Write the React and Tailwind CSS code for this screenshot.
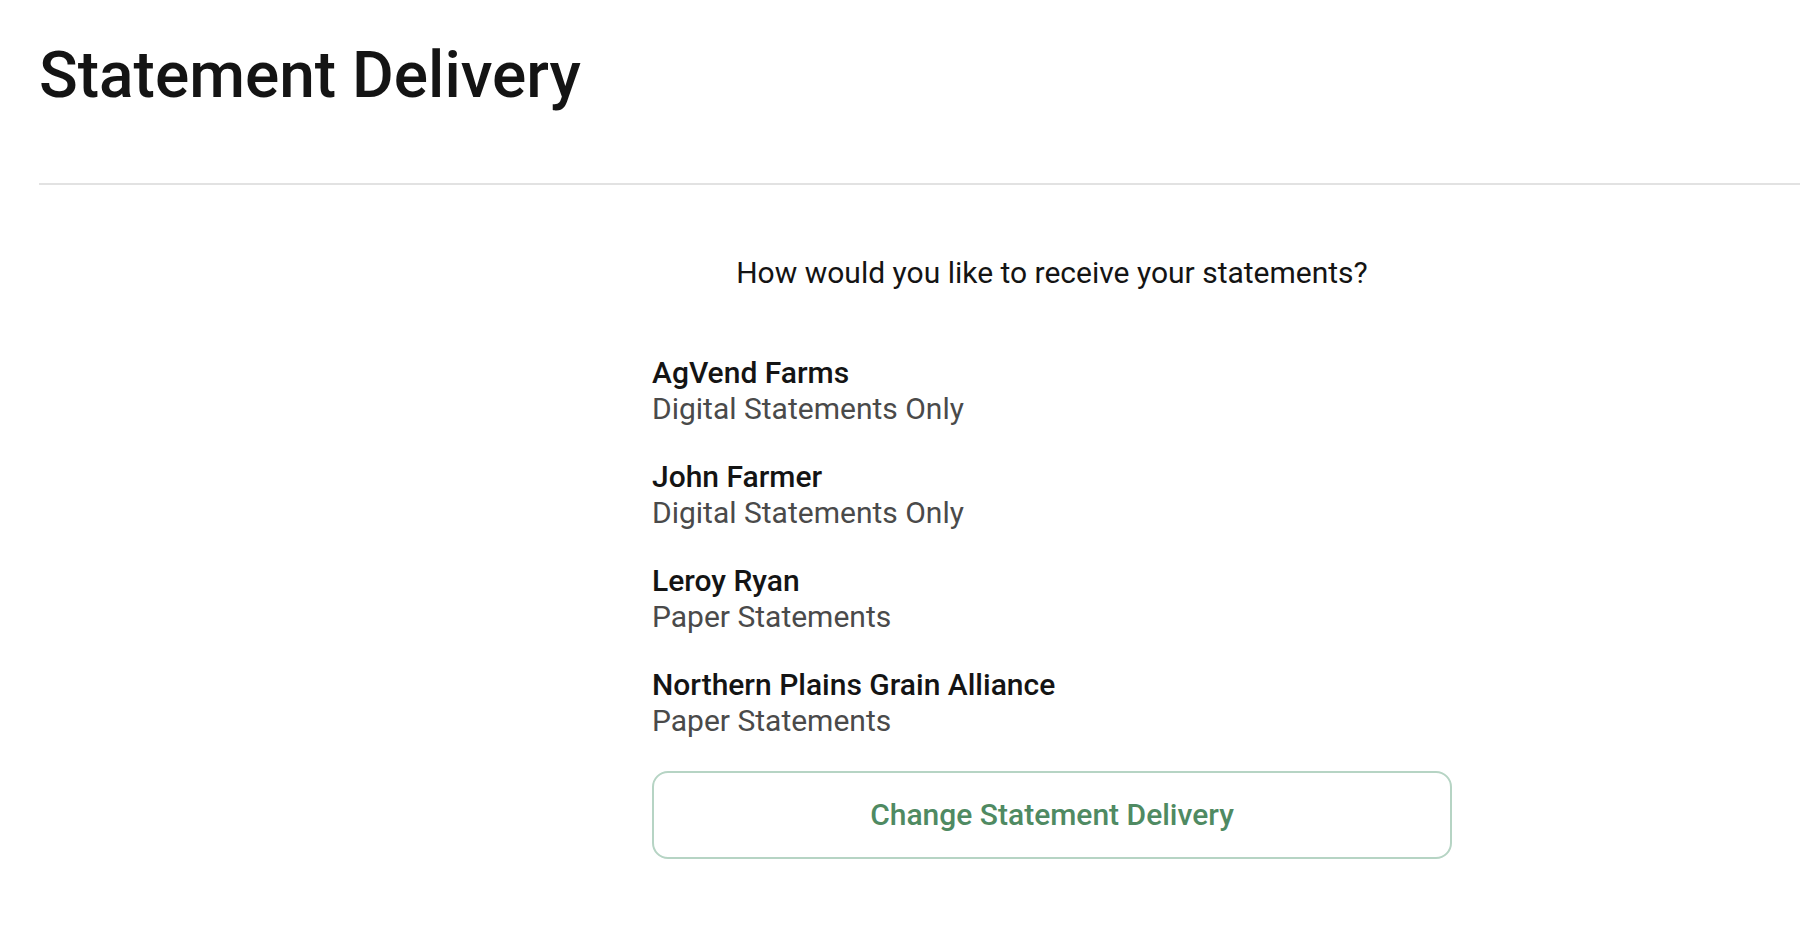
import React from "react";

const accounts = [
  { name: "AgVend Farms", delivery: "Digital Statements Only" },
  { name: "John Farmer", delivery: "Digital Statements Only" },
  { name: "Leroy Ryan", delivery: "Paper Statements" },
  { name: "Northern Plains Grain Alliance", delivery: "Paper Statements" },
];

export default function App() {
  return (
    <div className="min-h-screen bg-white font-['Roboto',sans-serif] text-[#141414]">
      <header className="pl-[39px] pt-[44px]">
        <h1 className="text-[64px] leading-none font-medium">Statement Delivery</h1>
        <div className="mt-[75px] h-[2px] bg-[#e2e2e2]" />
      </header>

      <main className="ml-[652px] w-[800px] pt-[70px] pb-16">
        <p className="text-center text-3xl">How would you like to receive your statements?</p>

        <ul className="mt-16 flex flex-col gap-8">
          {accounts.map((a) => (
            <li key={a.name}>
              <div className="text-3xl font-medium">{a.name}</div>
              <div className="text-3xl text-[#4a4a4a]">{a.delivery}</div>
            </li>
          ))}
        </ul>

        <button className="mt-8 flex h-[88px] w-full items-center justify-center rounded-2xl border-2 border-[#b6d4c4] bg-white text-3xl font-medium text-[#4f8a62]">
          Change Statement Delivery
        </button>
      </main>
    </div>
  );
}
